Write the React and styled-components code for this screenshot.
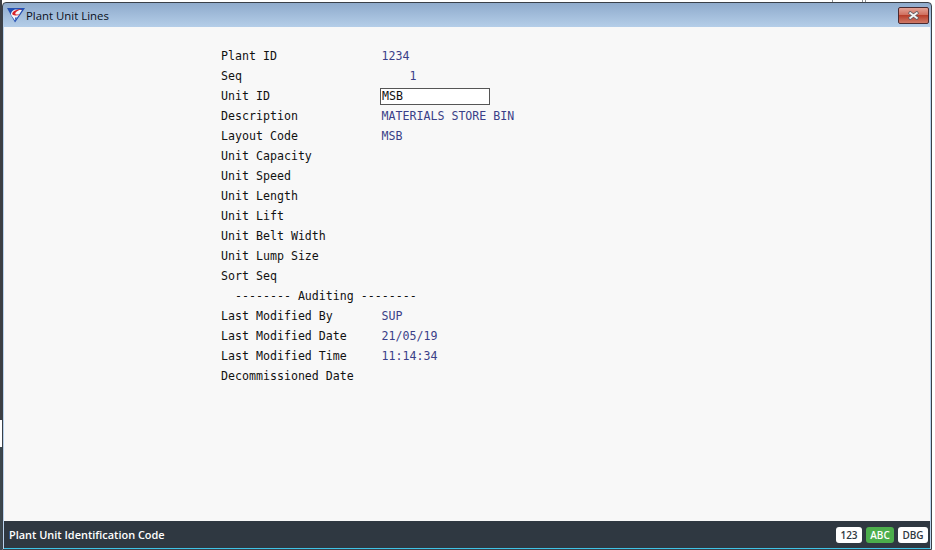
import React from "react";
import styled, { createGlobalStyle } from "styled-components";

const GlobalStyle = createGlobalStyle`
  html, body {
    margin: 0;
    padding: 0;
    height: 100%;
    background: #fff;
  }
  #root {
    height: 100%;
  }
`;

const Win = styled.div`
  box-sizing: border-box;
  width: 935px;
  height: 550px;
  display: flex;
  flex-direction: column;
  padding: 0 3px 0 2px;
  overflow: hidden;
  background:
    linear-gradient(#8a8d91, #8a8d91) 832px 0 / 1px 2px no-repeat,
    linear-gradient(#8a8d91, #8a8d91) 862px 0 / 1px 2px no-repeat,
    linear-gradient(#8a8d91, #8a8d91) 865px 0 / 1px 2px no-repeat,
    linear-gradient(#3c3f44, #3c3f44) 0 0 / 2px 420px no-repeat,
    linear-gradient(#3c474e, #3c474e) 0 447px / 2px 103px no-repeat;
`;

const Frame = styled.div`
  flex: 1;
  display: flex;
  flex-direction: column;
  margin-top: 2px;
  border: 1px solid #3a4048;
  border-radius: 4px 4px 0 0;
  background: linear-gradient(#8fabcc 0, #b9d2ec 27px, #b9d2ec 100%);
  min-height: 0;
`;

const TitleBar = styled.div`
  height: 24px;
  display: flex;
  align-items: center;
  padding: 0 2px 0 4px;
`;

const TitleText = styled.span`
  margin-left: 1px;
  font: 11.4px "Open Sans", "Liberation Sans", sans-serif;
  color: #0a1020;
`;

const CloseButton = styled.div`
  width: 29px;
  height: 15px;
  margin-left: auto;
  display: flex;
  align-items: center;
  justify-content: center;
  border: 1px solid #4a2a30;
  border-radius: 2px;
  background: linear-gradient(#e3a295 0, #d0705f 45%, #b83f2b 50%, #cf7a68 100%);
`;

const Client = styled.div`
  flex: 1;
  min-height: 0;
  margin: 0 1px 0 1px;
  display: flex;
  flex-direction: column;
  background: #f8f8f8;
`;

const Form = styled.div`
  flex: 1;
  padding: 19px 0 0 217px;
  font: 11.62px/20px "DejaVu Sans Mono", "Liberation Mono", monospace;
  color: #111;
`;

const Row = styled.div`
  height: 20px;
  display: flex;
  white-space: pre;
`;

const Label = styled.span`
  width: 160.5px;
`;

const Value = styled.span`
  color: #3a3f88;
`;

const Input = styled.div`
  box-sizing: border-box;
  width: 110px;
  height: 17px;
  margin: 2px 0 0 -1.5px;
  padding-left: 1px;
  line-height: 15px;
  background: #fff;
  border: 1px solid #555;
  color: #111;
`;

const StatusBar = styled.div`
  height: 27px;
  display: flex;
  align-items: center;
  gap: 4px;
  padding: 0 2px 0 5px;
  background: #2f3841;
  border-bottom: 1px solid #3fc4e6;
`;

const StatusText = styled.span`
  margin-right: auto;
  font: 600 10.95px "Open Sans", "Liberation Sans", sans-serif;
  color: #fff;
`;

const Badge = styled.span`
  width: ${(p) => p.$w}px;
  height: 16px;
  border-radius: 3px;
  background: ${(p) => (p.$on ? "#4cae4c" : "#fff")};
  color: ${(p) => (p.$on ? "#fff" : "#2f3841")};
  font: 600 10px/16px "Open Sans", "Liberation Sans", sans-serif;
  text-align: center;
`;

const rows = [
  ["Plant ID", "1234"],
  ["Seq", "    1"],
  ["Unit ID", null],
  ["Description", "MATERIALS STORE BIN"],
  ["Layout Code", "MSB"],
  ["Unit Capacity"],
  ["Unit Speed"],
  ["Unit Length"],
  ["Unit Lift"],
  ["Unit Belt Width"],
  ["Unit Lump Size"],
  ["Sort Seq"],
  ["  -------- Auditing --------"],
  ["Last Modified By", "SUP"],
  ["Last Modified Date", "21/05/19"],
  ["Last Modified Time", "11:14:34"],
  ["Decommissioned Date"],
];

const Logo = () => (
  <svg width="18" height="15" viewBox="0 0 18 15">
    <path d="M0 0h18L8 14.500z" fill="#2450b4" />
    <path d="M8 1.500C4.500 3 3 5.500 4.800 8L8 12.500 11.500 7.500 15 2z" fill="#f4f6fa" />
    <path d="M15 1C10 1 5 3.500 5.200 6c.2 1.800 4.500 1.800 8.300.4-2.600.3-5 .3-5.200-.7C8 4.300 11 2.200 15 1z" fill="#d8232a" />
    <path d="M8 9.500l2 0-1.600 3z" fill="#2450b4" />
  </svg>
);

const CloseIcon = () => (
  <svg width="13" height="9" viewBox="0 0 13 9">
    <path d="M2 1l9 7M11 1L2 8" stroke="#5a5a62" strokeWidth="3.400" />
    <path d="M2.500 1.500l8 6M10.500 1.500l-8 6" stroke="#f2f2f2" strokeWidth="2" />
  </svg>
);

export default function App() {
  return (
    <>
      <GlobalStyle />
      <Win>
        <Frame>
          <TitleBar>
            <Logo />
            <TitleText>Plant Unit Lines</TitleText>
            <CloseButton>
              <CloseIcon />
            </CloseButton>
          </TitleBar>
          <Client>
            <Form>
              {rows.map(([label, value]) => (
                <Row key={label}>
                  {value === undefined && label.startsWith(" ") ? (
                    label
                  ) : (
                    <>
                      <Label>{label}</Label>
                      {value === null ? <Input>MSB</Input> : <Value>{value}</Value>}
                    </>
                  )}
                </Row>
              ))}
            </Form>
            <StatusBar>
              <StatusText>Plant Unit Identification Code</StatusText>
              <Badge $w={26}>123</Badge>
              <Badge $w={28} $on>ABC</Badge>
              <Badge $w={30}>DBG</Badge>
            </StatusBar>
          </Client>
        </Frame>
      </Win>
    </>
  );
}
